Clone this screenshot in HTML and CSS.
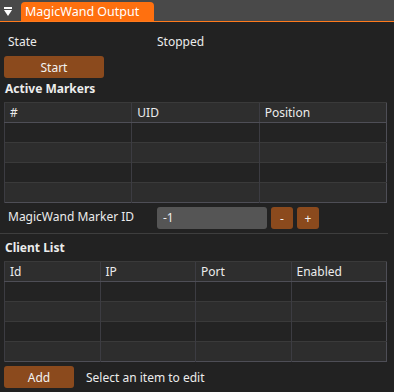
FILE: index.html
```html
<!DOCTYPE html>
<html lang="en">
<head>
    <meta charset="UTF-8">
    <title>MagicWand Output</title>
    <link rel="stylesheet" href="styles.css">
</head>
<body>
    <div class="titlebar">
        <svg class="menu-arrow" width="10" height="12" viewBox="0 0 10 12">
            <rect x="1" y="1" width="8" height="2" fill="#fff"/>
            <polygon points="1,4 9,4 5,10" fill="#fff"/>
        </svg>
        <div class="tab">MagicWand Output</div>
    </div>

    <div class="content">
        <div class="row state-row">
            <span class="label">State</span>
            <span>Stopped</span>
        </div>
        <div class="row">
            <button class="btn btn-start">Start</button>
        </div>

        <div class="heading">Active Markers</div>
        <table class="grid markers">
            <tr><th>#</th><th>UID</th><th>Position</th></tr>
            <tr><td></td><td></td><td></td></tr>
            <tr><td></td><td></td><td></td></tr>
            <tr><td></td><td></td><td></td></tr>
            <tr><td></td><td></td><td></td></tr>
        </table>

        <div class="row id-row">
            <span class="label">MagicWand Marker ID</span>
            <div class="input">-1</div>
            <button class="btn btn-small">-</button>
            <button class="btn btn-small">+</button>
        </div>

        <div class="separator"></div>

        <div class="heading">Client List</div>
        <table class="grid clients">
            <tr><th>Id</th><th>IP</th><th>Port</th><th>Enabled</th></tr>
            <tr><td></td><td></td><td></td><td></td></tr>
            <tr><td></td><td></td><td></td><td></td></tr>
            <tr><td></td><td></td><td></td><td></td></tr>
            <tr><td></td><td></td><td></td><td></td></tr>
        </table>

        <div class="row add-row">
            <button class="btn btn-add">Add</button>
            <span>Select an item to edit</span>
        </div>
    </div>
</body>
</html>
```

FILE: styles.css
```css
* {
  box-sizing: border-box;
}

body {
  margin: 0;
  width: 394px;
  height: 392px;
  background: #222222;
  color: #ececec;
  font-family: "Noto Sans", "Open Sans", sans-serif;
  font-size: 12px;
  overflow: hidden;
}

.titlebar {
  height: 22px;
  background: #494949;
  border-bottom: 1px solid #ff7a1c;
  display: flex;
  align-items: flex-end;
}

.menu-arrow {
  margin: 0 8px 3px 3px;
}

.tab {
  width: 133px;
  height: 19px;
  padding-left: 4px;
  background: #ff700f;
  color: #fff;
  font-size: 12.5px;
  line-height: 19px;
  border-radius: 4px 4px 0 0;
}

.content {
  padding: 0 7px 0 4px;
}

.row {
  display: flex;
  align-items: center;
}

.label {
  width: 153px;
  padding-left: 4px;
}

.state-row {
  height: 22px;
  margin-top: 8px;
}

.btn {
  border: none;
  border-radius: 3px;
  background: #8b4a1d;
  color: #f2f2f2;
  font-family: inherit;
  font-size: 12px;
  height: 22px;
  padding: 0;
  margin-top: 4px;
}

.btn-start {
  width: 100px;
}

.heading {
  font-weight: bold;
  height: 20px;
  line-height: 20px;
  margin-top: 1px;
  padding-left: 1px;
}

.separator + .heading {
  margin-top: 4px;
}

.grid {
  width: 383px;
  table-layout: fixed;
  border-collapse: collapse;
  border: 1px solid #4e4e56;
  margin-top: 3px;
}

.grid th,
.grid td {
  height: 20px;
  padding: 0 0 0 5px;
  border-left: 1px solid #3c3c42;
  border-top: 1px solid #3a3a3a;
  text-align: left;
  font-weight: normal;
}

.grid th {
  background: #2e2e2e;
  border-bottom: 1px solid #4e4e56;
}

.grid tr:nth-child(even) td {
  background: #232323;
}

.grid tr:nth-child(odd) td {
  background: #2d2d2d;
}

.input {
  width: 110px;
  height: 22px;
  line-height: 22px;
  padding-left: 6px;
  margin-top: 4px;
  background: #555555;
  border-radius: 3px;
}

.btn-small {
  width: 22px;
  margin-left: 4px;
}

.separator {
  height: 1px;
  background: #3e3e3e;
  margin: 4px 0 0 -4px;
  width: 388px;
}

.add-row span {
  margin: 4px 0 0 12px;
}

.btn-add {
  width: 70px;
}
```
